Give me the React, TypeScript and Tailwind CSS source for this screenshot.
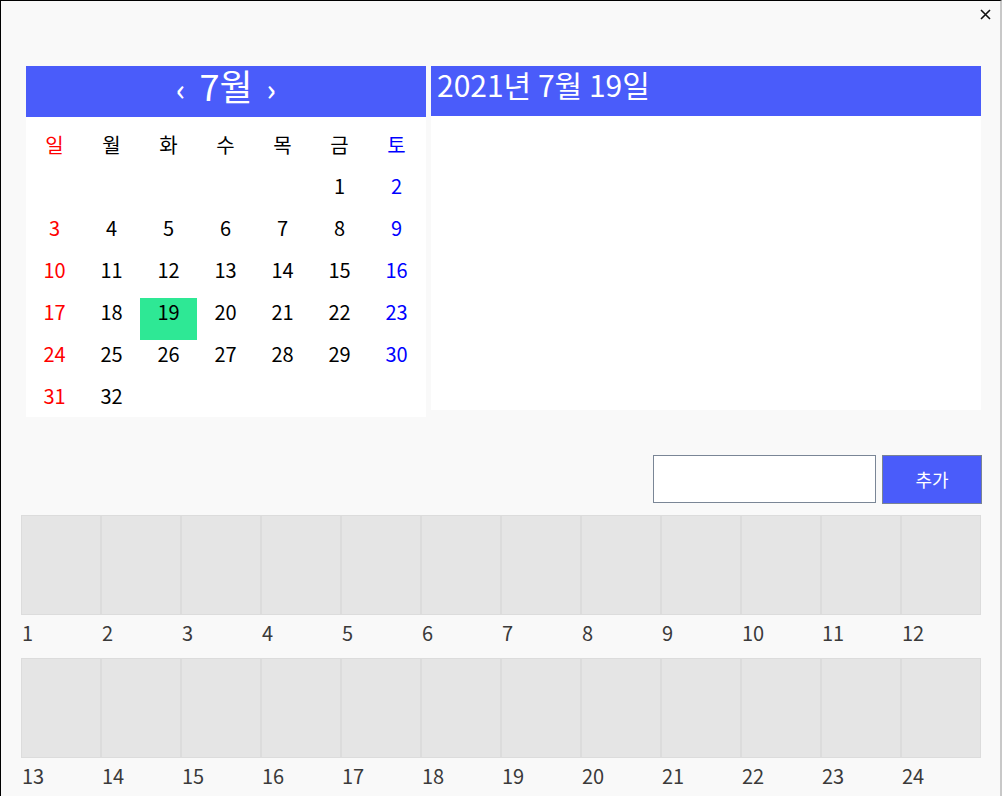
import React from "react";

const FONT = { fontFamily: '"Noto Sans CJK KR", "Noto Sans", sans-serif' };

const dayNames = ["일", "월", "화", "수", "목", "금", "토"];

const weeks: (number | null)[][] = [
  [null, null, null, null, null, 1, 2],
  [3, 4, 5, 6, 7, 8, 9],
  [10, 11, 12, 13, 14, 15, 16],
  [17, 18, 19, 20, 21, 22, 23],
  [24, 25, 26, 27, 28, 29, 30],
  [31, 32, null, null, null, null, null],
];

const colColor = (i: number) =>
  i === 0 ? "text-[#ff0000]" : i === 6 ? "text-[#0000ff]" : "text-black";

const Calendar: React.FC = () => (
  <div className="w-[400px] h-[351px] bg-white overflow-hidden">
    <div className="h-[51px] bg-[#4a5cfa] text-white flex justify-center items-baseline pt-[1px]">
      <span className="text-[30px] leading-none font-medium mr-[14px]">‹</span>
      <span className="text-[36px] leading-none">7월</span>
      <span className="text-[30px] leading-none font-medium ml-[14px]">›</span>
    </div>
    <div className="grid grid-cols-[repeat(7,57px)] h-[55px] items-center text-[20px]">
      {dayNames.map((d, i) => (
        <div key={d} className={`text-center ${colColor(i)}`}>
          {d}
        </div>
      ))}
    </div>
    {weeks.map((w, wi) => (
      <div key={wi} className="grid grid-cols-[repeat(7,57px)]">
        {w.map((d, i) => (
          <div
            key={i}
            className={`h-[42px] text-center text-[20px] leading-[27px] ${colColor(i)} ${
              d === 19 ? "bg-[#2ee895]" : ""
            }`}
          >
            {d ?? ""}
          </div>
        ))}
      </div>
    ))}
  </div>
);

const SlotRow: React.FC<{ start: number }> = ({ start }) => (
  <div>
    <div className="flex h-[100px]">
      {Array.from({ length: 12 }).map((_, i) => (
        <div key={i} className="w-[80px] h-full bg-[#e5e5e5] border border-[#dcdcdc]" />
      ))}
    </div>
    <div className="flex h-[43px]">
      {Array.from({ length: 12 }).map((_, i) => (
        <div key={i} className="w-[80px] pl-[1px] pt-[3px] text-[20px] leading-[29px] text-[#3a3a3a]">
          {start + i}
        </div>
      ))}
    </div>
  </div>
);

export default function App() {
  return (
    <div
      className="w-[1002px] h-[796px] bg-[#f9f9f9] border-l border-t border-r-2 border-l-black border-t-black border-r-[#c8c8c8] overflow-hidden"
      style={FONT}
    >
      <div className="h-[65px] flex justify-end pr-[9px] pt-[8px]">
        <svg width="11" height="11" viewBox="0 0 11 11">
          <path d="M1 1 L10 10 M10 1 L1 10" stroke="#111" strokeWidth="1.6" />
        </svg>
      </div>
      <div className="flex gap-[5px] pl-[25px]">
        <Calendar />
        <div className="w-[550px] h-[344px] bg-white">
          <div className="h-[50px] bg-[#4a5cfa] text-white text-[30px] leading-[36px] pl-[6px]">
            2021년 7월 19일
          </div>
        </div>
      </div>
      <div className="flex justify-end gap-[6px] pr-[18px] mt-[38px]">
        <input
          type="text"
          className="w-[223px] h-[48px] bg-white border border-[#7a8696] outline-none"
        />
        <button className="w-[100px] h-[49px] bg-[#4a5cfa] border border-[#7a8494] text-white text-[18px]">
          추가
        </button>
      </div>
      <div className="pl-[20px] mt-[11px]">
        <SlotRow start={1} />
        <SlotRow start={13} />
      </div>
    </div>
  );
}
